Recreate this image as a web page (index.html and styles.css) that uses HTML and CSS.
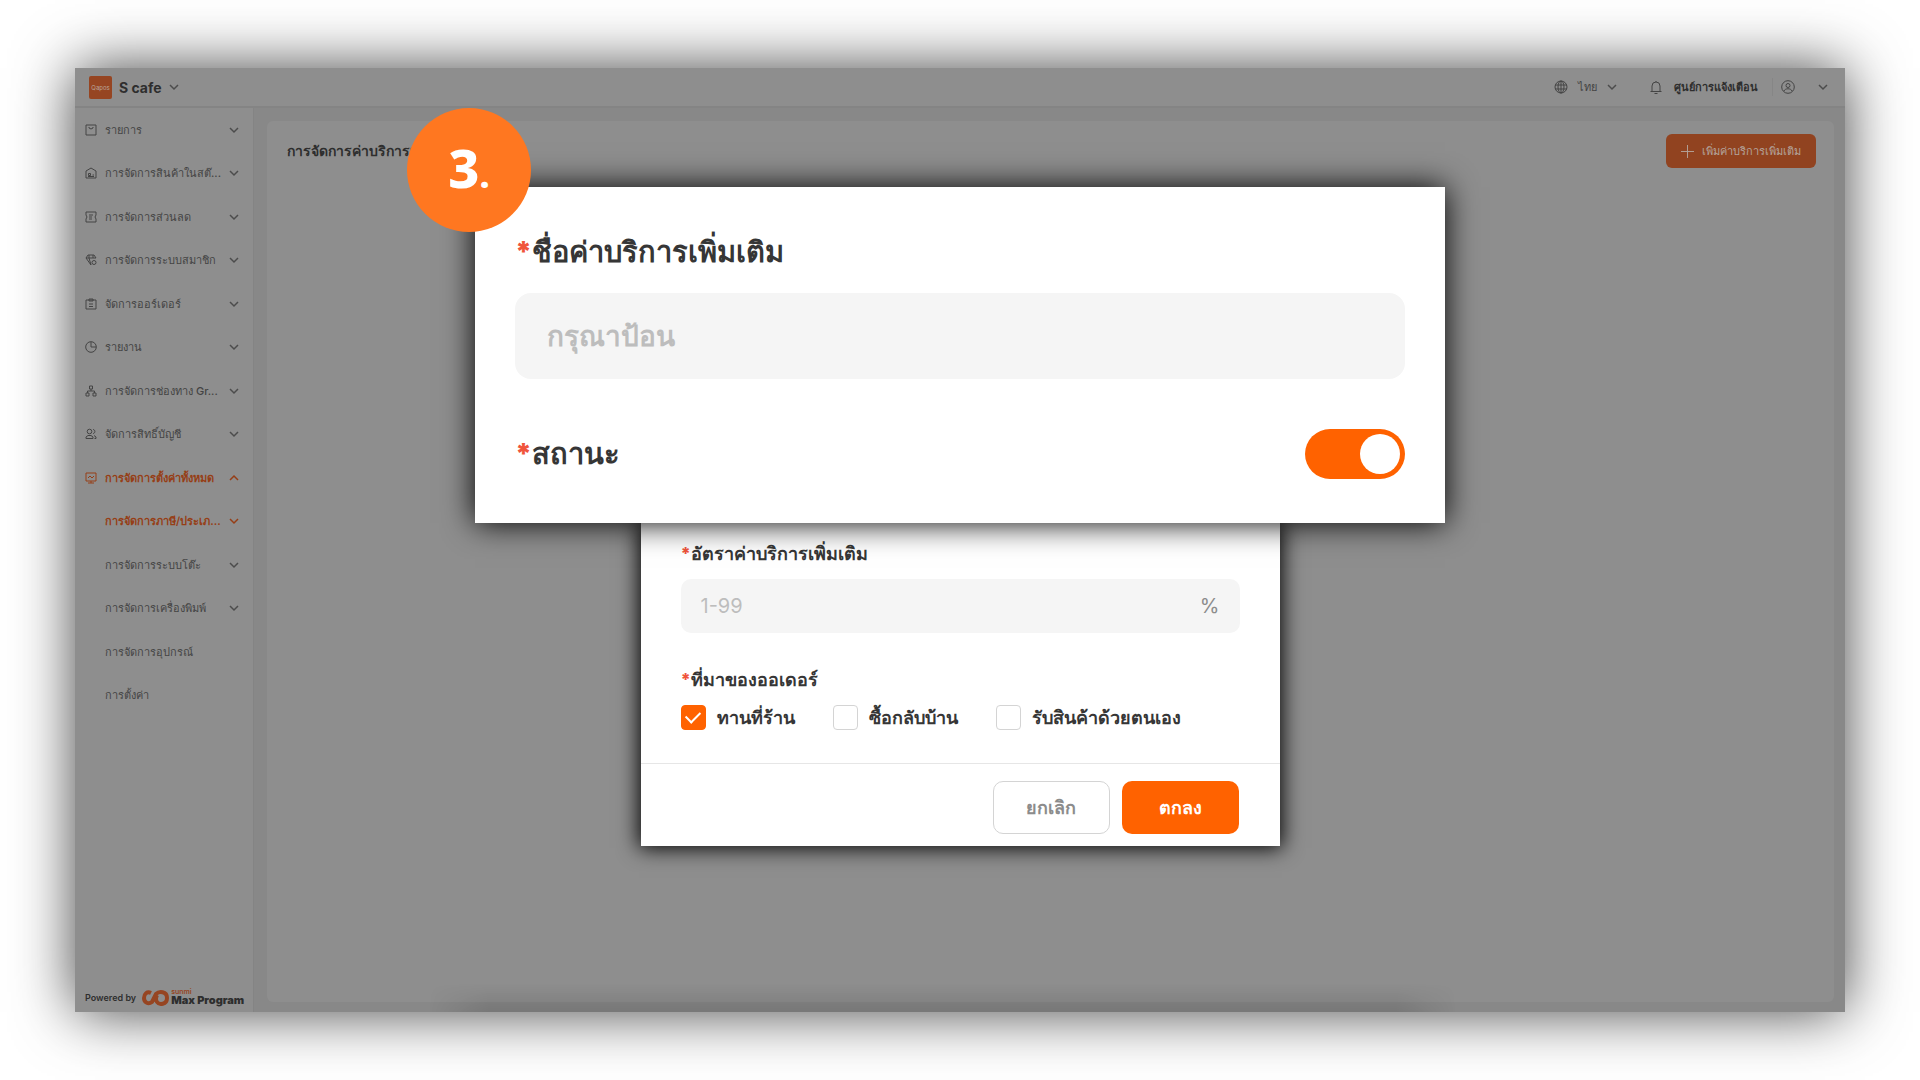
FILE: index.html
```html
<!DOCTYPE html>
<html lang="th">
<head>
    <meta charset="utf-8">
    <title>S cafe</title>
    <meta name="viewport" content="width=device-width, initial-scale=1">
    <link rel="stylesheet" href="styles.css">
</head>
<body>
    <svg class="defs" aria-hidden="true">
        <symbol id="i-down" viewBox="0 0 10 10"><path d="M1 3l4 4 4-4"/></symbol>
        <symbol id="i-up" viewBox="0 0 10 10"><path d="M1 7l4-4 4 4"/></symbol>
    </svg>
    <div class="app">
        <header class="topbar">
            <button class="store" type="button">
                <span class="store-logo">Qapos</span>
                S cafe
                <svg class="chev"><use href="#i-down"/></svg>
            </button>
            <button class="lang" type="button">
                <svg class="icon" viewBox="0 0 14 14"><circle cx="7" cy="7" r="6"/><ellipse cx="7" cy="7" rx="3" ry="6"/><path d="M1 5h12M1 9h12M7 1v12"/></svg>
                ไทย
                <svg class="chev"><use href="#i-down"/></svg>
            </button>
            <button class="notice" type="button">
                <svg class="icon" viewBox="0 0 14 14"><path d="M1.500 11.500h11M3 11.500V6a4 4 0 0 1 8 0v5.500M7 1v1M5.500 13.500h3"/></svg>
                ศูนย์การแจ้งเตือน
            </button>
            <button class="account" type="button" aria-label="บัญชี">
                <svg class="icon" viewBox="0 0 14 14"><circle cx="7" cy="7" r="6.300"/><circle cx="7" cy="5.500" r="2"/><path d="M3 11c1-3 7-3 8 0"/></svg>
                <svg class="chev"><use href="#i-down"/></svg>
            </button>
        </header>
        <div class="body">
            <aside class="sidebar">
                <nav class="menu">
                    <a href="#"><svg class="icon" viewBox="0 0 12 12"><path d="M1 1h10v10H1zM4 3v1l2 1 2-1V3"/></svg><span>รายการ</span><svg class="chev"><use href="#i-down"/></svg></a>
                    <a href="#"><svg class="icon" viewBox="0 0 12 12"><path d="M1 4l5-3 5 3v7H1zM3.500 6.500h2v2h-2zM3 9.500h6M7.500 8h1.500"/></svg><span>การจัดการสินค้าในสต๊...</span><svg class="chev"><use href="#i-down"/></svg></a>
                    <a href="#"><svg class="icon" viewBox="0 0 12 12"><path d="M1 1h10v3l-1 2 1 2v3H1V8l1-2-1-2zM4 4h4M4 6h3M4 8h3"/></svg><span>การจัดการส่วนลด</span><svg class="chev"><use href="#i-down"/></svg></a>
                    <a href="#"><svg class="icon" viewBox="0 0 12 12"><path d="M6 11L1 4l2-3h6l2 3M1 4h10M4 1v3l2 7M8 1v3"/><circle cx="9" cy="8.500" r="2"/></svg><span>การจัดการระบบสมาชิก</span><svg class="chev"><use href="#i-down"/></svg></a>
                    <a href="#"><svg class="icon" viewBox="0 0 12 12"><path d="M1 2h10v9H1zM4 1h4v2H4zM4 6h4M4 8.500h4"/></svg><span>จัดการออร์เดอร์</span><svg class="chev"><use href="#i-down"/></svg></a>
                    <a href="#"><svg class="icon" viewBox="0 0 12 12"><circle cx="6" cy="6" r="5.300"/><path d="M6 1v5h5"/></svg><span>รายงาน</span><svg class="chev"><use href="#i-down"/></svg></a>
                    <a href="#"><svg class="icon" viewBox="0 0 12 12"><path d="M4.500 1h3v3h-3zM1 8h3v3H1zM8 8h3v3H8zM6 4v2M2.500 8V6h7v2"/></svg><span>การจัดการช่องทาง Gr...</span><svg class="chev"><use href="#i-down"/></svg></a>
                    <a href="#"><svg class="icon" viewBox="0 0 12 12"><circle cx="4.500" cy="3.500" r="2.300"/><path d="M1 10.500V9l2-1.500h3L8 9v1.500zM8 1.500c2.500 0 2.500 4 0 4M9 7.500l2 1.500v1.500H9.500"/></svg><span>จัดการสิทธิ์บัญชี</span><svg class="chev"><use href="#i-down"/></svg></a>
                    <a href="#" class="active"><svg class="icon" viewBox="0 0 12 12"><path d="M1 1h10v8H1zM3 11h6M6 9v2M3 6l2-2 2 2 2-2"/></svg><span>การจัดการตั้งค่าทั้งหมด</span><svg class="chev"><use href="#i-up"/></svg></a>
                    <a href="#" class="sub active"><span>การจัดการภาษี/ประเภ...</span><svg class="chev"><use href="#i-down"/></svg></a>
                    <a href="#" class="sub"><span>การจัดการระบบโต๊ะ</span><svg class="chev"><use href="#i-down"/></svg></a>
                    <a href="#" class="sub"><span>การจัดการเครื่องพิมพ์</span><svg class="chev"><use href="#i-down"/></svg></a>
                    <a href="#" class="sub"><span>การจัดการอุปกรณ์</span></a>
                    <a href="#" class="sub"><span>การตั้งค่า</span></a>
                </nav>
                <div class="powered">
                    Powered by
                    <svg class="brand-mark" viewBox="0 0 28 16"><path d="M9 3C5 1 2 4 2 8s4 7 8 4l4-8c3-3 11-3 11 4s-8 7-10 4-1-5 0-7"/></svg>
                    <div class="brand"><small>sunmi</small><b>Max Program</b></div>
                </div>
            </aside>
            <main class="content">
                <section class="card">
                    <h1>การจัดการค่าบริการเพิ่มเติม</h1>
                    <button class="btn-add" type="button">
                        <svg viewBox="0 0 14 14"><path d="M7 0v14M0 7h14"/></svg>
                        เพิ่มค่าบริการเพิ่มเติม
                    </button>
                </section>
            </main>
        </div>
    </div>

    <form class="dialogs">
        <div class="panel panel-front">
            <div class="step">3<span>.</span></div>
            <label class="label" for="name"><i>*</i>ชื่อค่าบริการเพิ่มเติม</label>
            <input class="field" type="text" id="name" placeholder="กรุณาป้อน">
            <div class="switch-row">
                <label class="label" for="status"><i>*</i>สถานะ</label>
                <input class="switch" type="checkbox" role="switch" id="status" checked>
            </div>
        </div>
        <div class="panel panel-back">
            <div class="rate">
                <label class="label" for="rate"><i>*</i>อัตราค่าบริการเพิ่มเติม</label>
                <div class="field">
                    <input type="text" id="rate" placeholder="1-99">
                    <span>%</span>
                </div>
            </div>
            <fieldset class="source">
                <legend class="label"><i>*</i>ที่มาของออเดอร์</legend>
                <div class="checks">
                    <label><input type="checkbox" checked>ทานที่ร้าน</label>
                    <label><input type="checkbox">ซื้อกลับบ้าน</label>
                    <label><input type="checkbox">รับสินค้าด้วยตนเอง</label>
                </div>
            </fieldset>
            <footer class="actions">
                <button class="btn-cancel" type="button">ยกเลิก</button>
                <button class="btn-ok" type="submit">ตกลง</button>
            </footer>
        </div>
    </form>
</body>
</html>
```

FILE: styles.css
```css
* {
    box-sizing: border-box;
}
body {
    margin: 0;
    min-height: 100vh;
    padding: 68px 75px;
    display: flex;
    background: #fff;
    color: #2e2e2e;
    font-family: Inter, "Noto Sans", sans-serif;
    font-size: 11px;
    position: relative;
}
button, input {
    font: inherit;
    color: inherit;
}
button {
    border: 0;
    background: none;
    padding: 0;
    cursor: pointer;
}
svg {
    fill: none;
    stroke: currentColor;
    flex-shrink: 0;
}
.defs {
    position: absolute;
    width: 0;
    height: 0;
}
.icon {
    width: 12px;
    height: 12px;
}
.chev {
    width: 10px;
    height: 10px;
    stroke-width: 1.5;
    color: #4c4c4c;
}

/* page */
.app {
    flex: 1;
    display: flex;
    flex-direction: column;
    background: #888;
    box-shadow: 0 0 56px rgba(0, 0, 0, .74);
    position: relative;
}
.topbar {
    display: flex;
    align-items: center;
    height: 40px;
    padding: 0 17px 0 14px;
    background: #8e8e8e;
    border-bottom: 2px solid #848484;
}
.topbar button {
    display: flex;
    align-items: center;
}
.topbar .icon {
    width: 14px;
    height: 14px;
    color: #444;
}
.store {
    gap: 7px;
    margin-right: auto;
    font-size: 14px;
    font-weight: 700;
}
.store-logo {
    display: flex;
    align-items: center;
    justify-content: center;
    width: 23px;
    height: 23px;
    border-radius: 2px;
    background: #964522;
    color: #b9a59b;
    font-size: 6px;
    font-weight: 400;
}
.lang {
    gap: 10px;
    color: #444;
}
.notice {
    gap: 11px;
    margin-left: 32px;
    padding-right: 14px;
    border-right: 1px solid #868686;
    font-weight: 700;
}
.account {
    gap: 23px;
    margin-left: 8px;
}
.body {
    flex: 1;
    display: flex;
}
.sidebar {
    width: 179px;
    display: flex;
    flex-direction: column;
    justify-content: space-between;
    background: #8e8e8e;
    border-right: 1px solid #848484;
}
.menu {
    display: grid;
    grid-auto-rows: 1fr;
    height: 609px;
}
.menu a {
    display: flex;
    align-items: center;
    gap: 8px;
    padding: 0 14px 0 10px;
    color: #444;
    font-weight: 500;
    text-decoration: none;
}
.menu span {
    width: 116px;
    white-space: nowrap;
}
.menu .sub {
    padding-left: 30px;
}
.menu .active, .menu .active .chev {
    color: #963e16;
}
.menu .active {
    font-weight: 600;
}
.powered {
    display: flex;
    align-items: center;
    gap: 6px;
    padding: 0 0 6px 10px;
    font-size: 9px;
    font-weight: 600;
    white-space: nowrap;
}
.brand-mark {
    width: 28px;
    height: 16px;
    stroke: #964522;
    stroke-width: 4;
}
.brand {
    display: flex;
    flex-direction: column;
    margin-left: -5px;
}
.brand small {
    color: #964522;
    font-size: 7px;
    line-height: 6px;
}
.brand b {
    font-size: 11px;
    line-height: 11px;
}
.content {
    flex: 1;
    display: flex;
    padding: 13px 11px 10px 13px;
}
.card {
    flex: 1;
    display: flex;
    justify-content: space-between;
    align-items: flex-start;
    padding: 13px 18px 13px 20px;
    border-radius: 6px;
    background: #8e8e8e;
}
.card h1 {
    margin: 0;
    font-size: 14px;
    font-weight: 600;
    line-height: 34px;
}
.btn-add {
    display: flex;
    align-items: center;
    justify-content: center;
    gap: 8px;
    width: 150px;
    height: 34px;
    border-radius: 6px;
    background: #914320;
    color: #b3a49c;
    font-weight: 500;
    white-space: nowrap;
}
.btn-add svg {
    width: 13px;
    height: 13px;
}
/* soft shade along the lower edge */
.app::after {
    content: "";
    position: absolute;
    left: 20%;
    right: 22%;
    bottom: 0;
    height: 28px;
    background: linear-gradient(transparent, rgba(0, 0, 0, .12));
    mask-image: linear-gradient(90deg, transparent, #000 60px, #000 calc(100% - 60px), transparent);
}

/* dialogs */
.dialogs {
    position: absolute;
    top: 187px;
    left: 0;
    right: 0;
    display: flex;
    flex-direction: column;
    align-items: center;
    color: #363636;
}
.panel {
    background: #fff;
    max-width: 90%;
}
.panel-front {
    position: relative;
    z-index: 1;
    width: 970px;
    padding: 40px 40px 44px;
    box-shadow: 0 0 30px #000;
}
.panel-back {
    width: 639px;
    box-shadow: 0 0 20px 2px #000;
}
.label {
    display: block;
    padding: 0;
    font-size: 18px;
    font-weight: 600;
    line-height: 26px;
}
.label i {
    color: #f0553c;
    font-style: normal;
    font-size: 17px;
    font-weight: 900;
    line-height: 0;
}
.panel-front .label {
    font-size: 29px;
    line-height: 50px;
}
.panel-front .label i {
    font-size: 28px;
}
.field {
    width: 100%;
    border: 0;
    border-radius: 10px;
    background: #f5f5f5;
}
input::placeholder {
    color: #bdbdbd;
    opacity: 1;
}
.panel-front .field {
    display: block;
    height: 86px;
    margin: 16px 0 50px;
    padding: 0 32px;
    border-radius: 16px;
    font-size: 28px;
    font-weight: 600;
}
.switch-row {
    display: flex;
    align-items: center;
    justify-content: space-between;
}
.switch {
    appearance: none;
    width: 100px;
    height: 50px;
    margin: 0;
    padding: 5px;
    border-radius: 25px;
    background: #ccc;
}
.switch::before {
    content: "";
    display: block;
    width: 40px;
    height: 40px;
    border-radius: 50%;
    background: #fff;
}
.switch:checked {
    background: #ff6200;
}
.switch:checked::before {
    margin-left: auto;
}
.step {
    position: absolute;
    top: -79px;
    left: -68px;
    display: flex;
    align-items: baseline;
    justify-content: center;
    width: 124px;
    height: 124px;
    border-radius: 50%;
    background: #ff7720;
    color: #fff;
    font-family: "Noto Sans", sans-serif;
    font-size: 54px;
    font-weight: 800;
    line-height: 118px;
}
.step span {
    font-size: 36px;
}
.rate {
    padding: 18px 40px 0;
}
.rate .field {
    display: flex;
    align-items: center;
    height: 54px;
    margin-top: 12px;
    padding: 0 20px;
    color: #8c8c8c;
    font-size: 20px;
}
.rate input {
    flex: 1;
    border: 0;
    padding: 0;
    background: none;
}
.source {
    margin: 0;
    padding: 34px 40px 33px;
    border: 0;
    border-bottom: 1px solid #e6e6e6;
}
.source legend {
    float: left;
    width: 100%;
}
.checks {
    clear: both;
    display: flex;
    gap: 38px;
    padding-top: 12px;
}
.checks label {
    display: flex;
    align-items: center;
    gap: 11px;
    height: 25px;
    font-size: 18px;
    font-weight: 600;
    white-space: nowrap;
}
.checks input {
    appearance: none;
    display: grid;
    place-items: center;
    width: 25px;
    height: 25px;
    margin: 0;
    border: 1px solid #d4d4d4;
    border-radius: 4px;
}
.checks input:checked {
    border-color: #ff6200;
    background: #ff6200;
}
.checks input:checked::before {
    content: "";
    width: 12px;
    height: 7px;
    margin-bottom: 4px;
    border: solid #fff;
    border-width: 0 0 2px 2px;
    transform: rotate(-45deg);
}
.actions {
    display: flex;
    align-items: center;
    justify-content: flex-end;
    gap: 12px;
    padding: 17px 41px 12px;
}
.actions button {
    width: 117px;
    height: 53px;
    border-radius: 10px;
    font-size: 18px;
    font-weight: 600;
}
.actions .btn-cancel {
    border: 1px solid #d4d4d4;
    color: #8c8c8c;
}
.actions .btn-ok {
    background: #ff6200;
    color: #fff;
}
```
